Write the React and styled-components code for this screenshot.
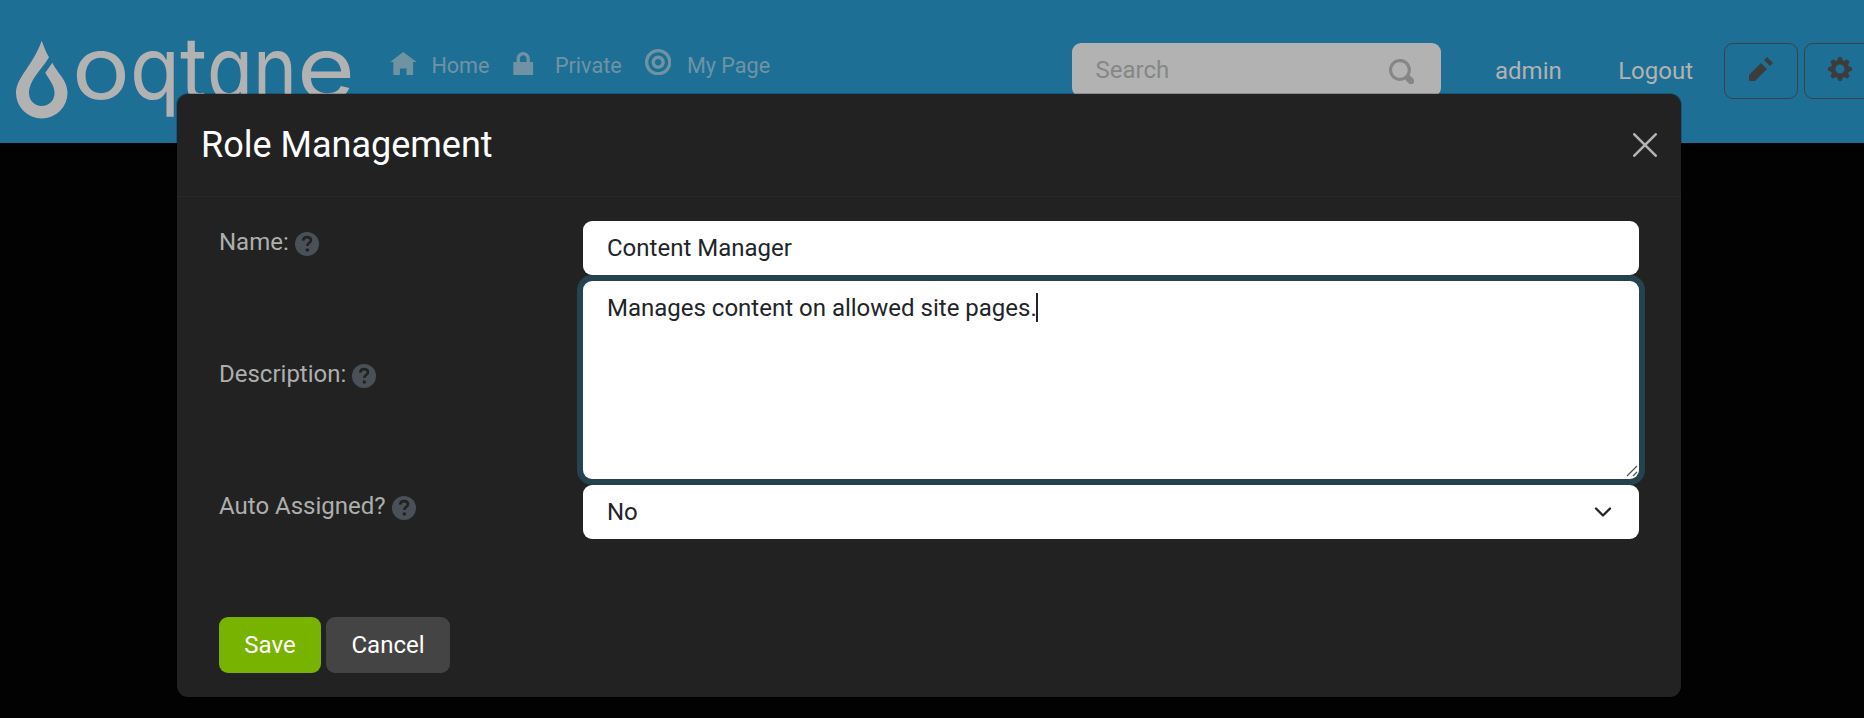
import React from "react";
import styled, { createGlobalStyle } from "styled-components";

const GlobalStyle = createGlobalStyle`
  * { box-sizing: border-box; }
  body {
    margin: 0;
    overflow: hidden;
    background: #020202;
    font-family: Roboto, "Liberation Sans", sans-serif;
    font-size: 24px;
    line-height: 36px;
  }
  button { font: inherit; }
`;

const Page = styled.div`
  position: relative;
  width: 100%;
  height: 718px;
  overflow: hidden;
  background: #020202;
`;

const TopBar = styled.header`
  display: flex;
  align-items: flex-start;
  width: 1904px;
  height: 143px;
  background: #1d6f96;
  color: #b2b2b2;
`;

const Brand = styled.svg`
  display: block;
  flex: none;
  width: 390px;
  height: 143px;
  fill: #b2b2b2;
`;

const Wordmark = styled.text`
  font-family: Inter, Lato, sans-serif;
  font-size: 87px;
  font-weight: 400;
  font-feature-settings: "cv11";
`;

const Nav = styled.nav`
  display: flex;
  flex: none;
  width: 682px;
  padding-top: 47px;
  color: #7093a4;
  font-size: 21.6px;
`;

const NavItem = styled.a`
  display: flex;
  flex: none;
  width: ${(p) => p.$width}px;
  gap: ${(p) => p.$gap}px;
  white-space: nowrap;
`;

const NavText = styled.span`
  padding-top: 1px;
`;

const Glyph = styled.svg`
  display: block;
  flex: none;
  width: ${(p) => p.$size}px;
  height: ${(p) => p.$size}px;
  margin-top: ${(p) => p.$top || 0}px;
  fill: currentColor;
`;

const SearchBox = styled.div`
  display: flex;
  flex: none;
  justify-content: space-between;
  width: 369px;
  height: 54px;
  margin-top: 43px;
  padding: 9px 27px 9px 23.5px;
  border-radius: 9px;
  background: #b2b2b2;
  color: #858786;
`;

const Account = styled.div`
  display: flex;
  flex: none;
  justify-content: space-between;
  width: 198px;
  margin: 53px 0 0 54px;
`;

const ToolButton = styled.button`
  display: flex;
  flex: none;
  justify-content: center;
  width: ${(p) => p.$width}px;
  height: 56px;
  margin: 43px 6px 0 0;
  padding: 13px 0 0;
  border: 1px solid #3a4248;
  border-radius: 9px;
  background: transparent;
  color: #3c3c3c;
`;

const Tools = styled.div`
  display: flex;
  flex: none;
  margin-left: 31px;
`;

const Dialog = styled.section`
  position: absolute;
  left: 177px;
  top: 94px;
  width: 1504px;
  height: 603px;
  border-radius: 11px;
  background: #222222;
  box-shadow: 0 0 0 1px rgba(0, 0, 0, 0.2);
  color: #adafae;
`;

const DialogHeader = styled.div`
  display: flex;
  align-items: center;
  justify-content: space-between;
  height: 103px;
  padding: 0 24px;
  border-bottom: 1px solid #282828;
`;

const Title = styled.h5`
  margin: 0;
  color: #fff;
  font-size: 36px;
  font-weight: 400;
  line-height: 43px;
`;

const CloseIcon = styled.svg`
  display: block;
  width: 24px;
  height: 24px;
  stroke: #b3b3b3;
  stroke-width: 2.6;
  stroke-linecap: round;
`;

const Form = styled.div`
  padding: 24px 42px 0;
`;

const Row = styled.div`
  display: grid;
  grid-template-columns: 364px 1056px;
  height: ${(p) => p.$height}px;
`;

const Label = styled.label`
  display: flex;
  align-items: flex-start;
  gap: 6px;
  padding-top: ${(p) => p.$top}px;
`;

const HelpSvg = styled.svg`
  display: block;
  width: 24px;
  height: 24px;
  margin-top: 8px;
`;

const Field = styled.div`
  display: flex;
  justify-content: space-between;
  height: 54px;
  padding: 9px 27px 9px 24px;
  border-radius: 9px;
  background: #fff;
  color: #212529;
`;

const TextArea = styled(Field)`
  position: relative;
  justify-content: flex-start;
  height: 198px;
  box-shadow: 0 0 0 6px #25424f;
`;

const Caret = styled.span`
  width: 2px;
  height: 29px;
  margin: 3px 0 0 -1px;
  background: #212529;
`;

const Grip = styled.svg`
  position: absolute;
  right: 0;
  bottom: 1px;
  width: 14px;
  height: 14px;
  fill: none;
  stroke: #555;
  stroke-width: 1.3;
`;

const Chevron = styled.svg`
  width: 18px;
  height: 18px;
  margin-top: 9px;
  fill: none;
  stroke: #212529;
  stroke-width: 2.3;
  stroke-linecap: round;
  stroke-linejoin: round;
`;

const Actions = styled.div`
  display: flex;
  gap: 5px;
  padding: 78px 42px 0;
`;

const Button = styled.button`
  width: ${(p) => p.$width}px;
  height: 56px;
  padding: 0;
  border: 0;
  border-radius: 9px;
  background: ${(p) => (p.$primary ? "#77b300" : "#444444")};
  color: #fff;
`;

const paths = {
  home: "M4 0l-4 3h1v4h2v-2h2v2h2v-4h1l-4-3z",
  lock: "M4 0c-1.1 0-2 .9-2 2v1h-1v4h6v-4h-1v-1c0-1.1-.9-2-2-2zm0 1c.56 0 1 .44 1 1v1h-2v-1c0-.56.44-1 1-1z",
  target:
    "M4 0c-2.2 0-4 1.8-4 4s1.8 4 4 4 4-1.8 4-4-1.8-4-4-4zm0 1c1.66 0 3 1.34 3 3s-1.34 3-3 3-3-1.34-3-3 1.34-3 3-3zm0 1c-1.1 0-2 .9-2 2s.9 2 2 2 2-.9 2-2-.9-2-2-2zm0 1c.56 0 1 .44 1 1s-.44 1-1 1-1-.44-1-1 .44-1 1-1z",
  search:
    "M3.5 0c-1.93 0-3.5 1.57-3.5 3.5s1.57 3.5 3.5 3.5c.59 0 1.17-.14 1.66-.41a1 1 0 0 0 .13.13l1 1a1.02 1.02 0 1 0 1.44-1.44l-1-1a1 1 0 0 0-.16-.13c.27-.49.44-1.06.44-1.66 0-1.93-1.55-3.5-3.5-3.5zm0 1c1.39 0 2.5 1.11 2.5 2.5s-1.11 2.5-2.5 2.5-2.5-1.11-2.5-2.5 1.11-2.5 2.5-2.5z",
  pencil: "M6 0l-1 1 2 2 1-1-2-2zm-2 2l-4 4v2h2l4-4-2-2z",
  cog: "M3.5 0l-.5 1.19c-.1.03-.19.08-.28.13l-1.19-.5-.72.72.5 1.19c-.05.1-.09.18-.13.28l-1.19.5v1l1.19.5c.04.1.08.18.13.28l-.5 1.19.72.72 1.19-.5c.09.04.18.09.28.13l.5 1.19h1l.5-1.19c.09-.04.19-.08.28-.13l1.19.5.72-.72-.5-1.19c.04-.09.09-.19.13-.28l1.19-.5v-1l-1.19-.5c-.03-.09-.08-.19-.13-.28l.5-1.19-.72-.72-1.19.5c-.09-.04-.19-.09-.28-.13l-.5-1.19h-1zm.5 2.5c.83 0 1.5.67 1.5 1.5s-.67 1.5-1.5 1.5-1.5-.67-1.5-1.5.67-1.5 1.5-1.5z",
};

const letters = [
  { char: "o", x: 72, width: 58 },
  { char: "q", x: 130, width: 50 },
  { char: "t", x: 180, width: 27 },
  { char: "a", x: 207, width: 46 },
  { char: "n", x: 253, width: 44 },
  { char: "e", x: 297, width: 58 },
];

function Icon({ name, size, top }) {
  return (
    <Glyph viewBox="0 0 8 8" $size={size} $top={top}>
      <path d={paths[name]} />
    </Glyph>
  );
}

function Help() {
  return (
    <HelpSvg viewBox="0 0 24 24">
      <circle cx="12" cy="12" r="12" fill="#495057" />
      <path
        d="M8.2 8.6C8.3 6.4 9.8 5.1 12.1 5.1c2.3 0 3.9 1.3 3.9 3.2 0 2.7-3.6 2.8-3.6 5.2v.6"
        fill="none"
        stroke="#222"
        strokeWidth="2.6"
      />
      <circle cx="12.3" cy="18" r="1.8" fill="#222" />
    </HelpSvg>
  );
}

export default function App() {
  return (
    <Page>
      <GlobalStyle />
      <TopBar>
        <Brand viewBox="0 0 390 143">
          <path d="M41.7 40.7C44 47 46 52 49 57.3C43 68 29 80 29 93C29 100.500 34.500 106 41.700 106C49 106 54.500 100.500 54.500 93C54.500 85.500 50 81 45.300 72.700L52.300 62.700C58 74 67.500 80 67.500 93A25.700 25.400 0 0 1 16 93C16 77 33 66 41.700 40.700Z" />
          <Wordmark y="99">
            {letters.map((l) => (
              <tspan key={l.char} x={l.x} textLength={l.width} lengthAdjust="spacingAndGlyphs">
                {l.char}
              </tspan>
            ))}
          </Wordmark>
        </Brand>
        <Nav>
          <NavItem $width={120} $gap={15}>
            <Icon name="home" size={26.4} top={5} />
            <NavText>Home</NavText>
          </NavItem>
          <NavItem $width={135} $gap={18.5}>
            <Icon name="lock" size={26.4} top={5} />
            <NavText>Private</NavText>
          </NavItem>
          <NavItem $width={130} $gap={15.5}>
            <Icon name="target" size={26.4} top={2} />
            <NavText>My Page</NavText>
          </NavItem>
        </Nav>
        <SearchBox>
          Search
          <Icon name="search" size={25} top={7} />
        </SearchBox>
        <Account>
          <span>admin</span>
          <span>Logout</span>
        </Account>
        <Tools>
          <ToolButton $width={74}><Icon name="pencil" size={24} /></ToolButton>
          <ToolButton $width={72}><Icon name="cog" size={24} /></ToolButton>
        </Tools>
      </TopBar>
      <Dialog>
        <DialogHeader>
          <Title>Role Management</Title>
          <CloseIcon viewBox="0 0 24 24">
            <path d="M1.300 1.300L22.700 22.700M22.700 1.300L1.300 22.700" />
          </CloseIcon>
        </DialogHeader>
        <Form>
          <Row $height={60}>
            <Label $top={3}>Name:<Help /></Label>
            <Field>Content Manager</Field>
          </Row>
          <Row $height={204}>
            <Label $top={75}>Description:<Help /></Label>
            <TextArea>
              Manages content on allowed site pages.
              <Caret />
              <Grip viewBox="0 0 14 14">
                <path d="M2 12L12 2M8 12L12 8" />
              </Grip>
            </TextArea>
          </Row>
          <Row $height={54}>
            <Label $top={3}>Auto Assigned?<Help /></Label>
            <Field>
              No
              <Chevron viewBox="0 0 18 18">
                <path d="M2 5.500L9 12.500L16 5.500" />
              </Chevron>
            </Field>
          </Row>
        </Form>
        <Actions>
          <Button $width={102} $primary>Save</Button>
          <Button $width={124}>Cancel</Button>
        </Actions>
      </Dialog>
    </Page>
  );
}
